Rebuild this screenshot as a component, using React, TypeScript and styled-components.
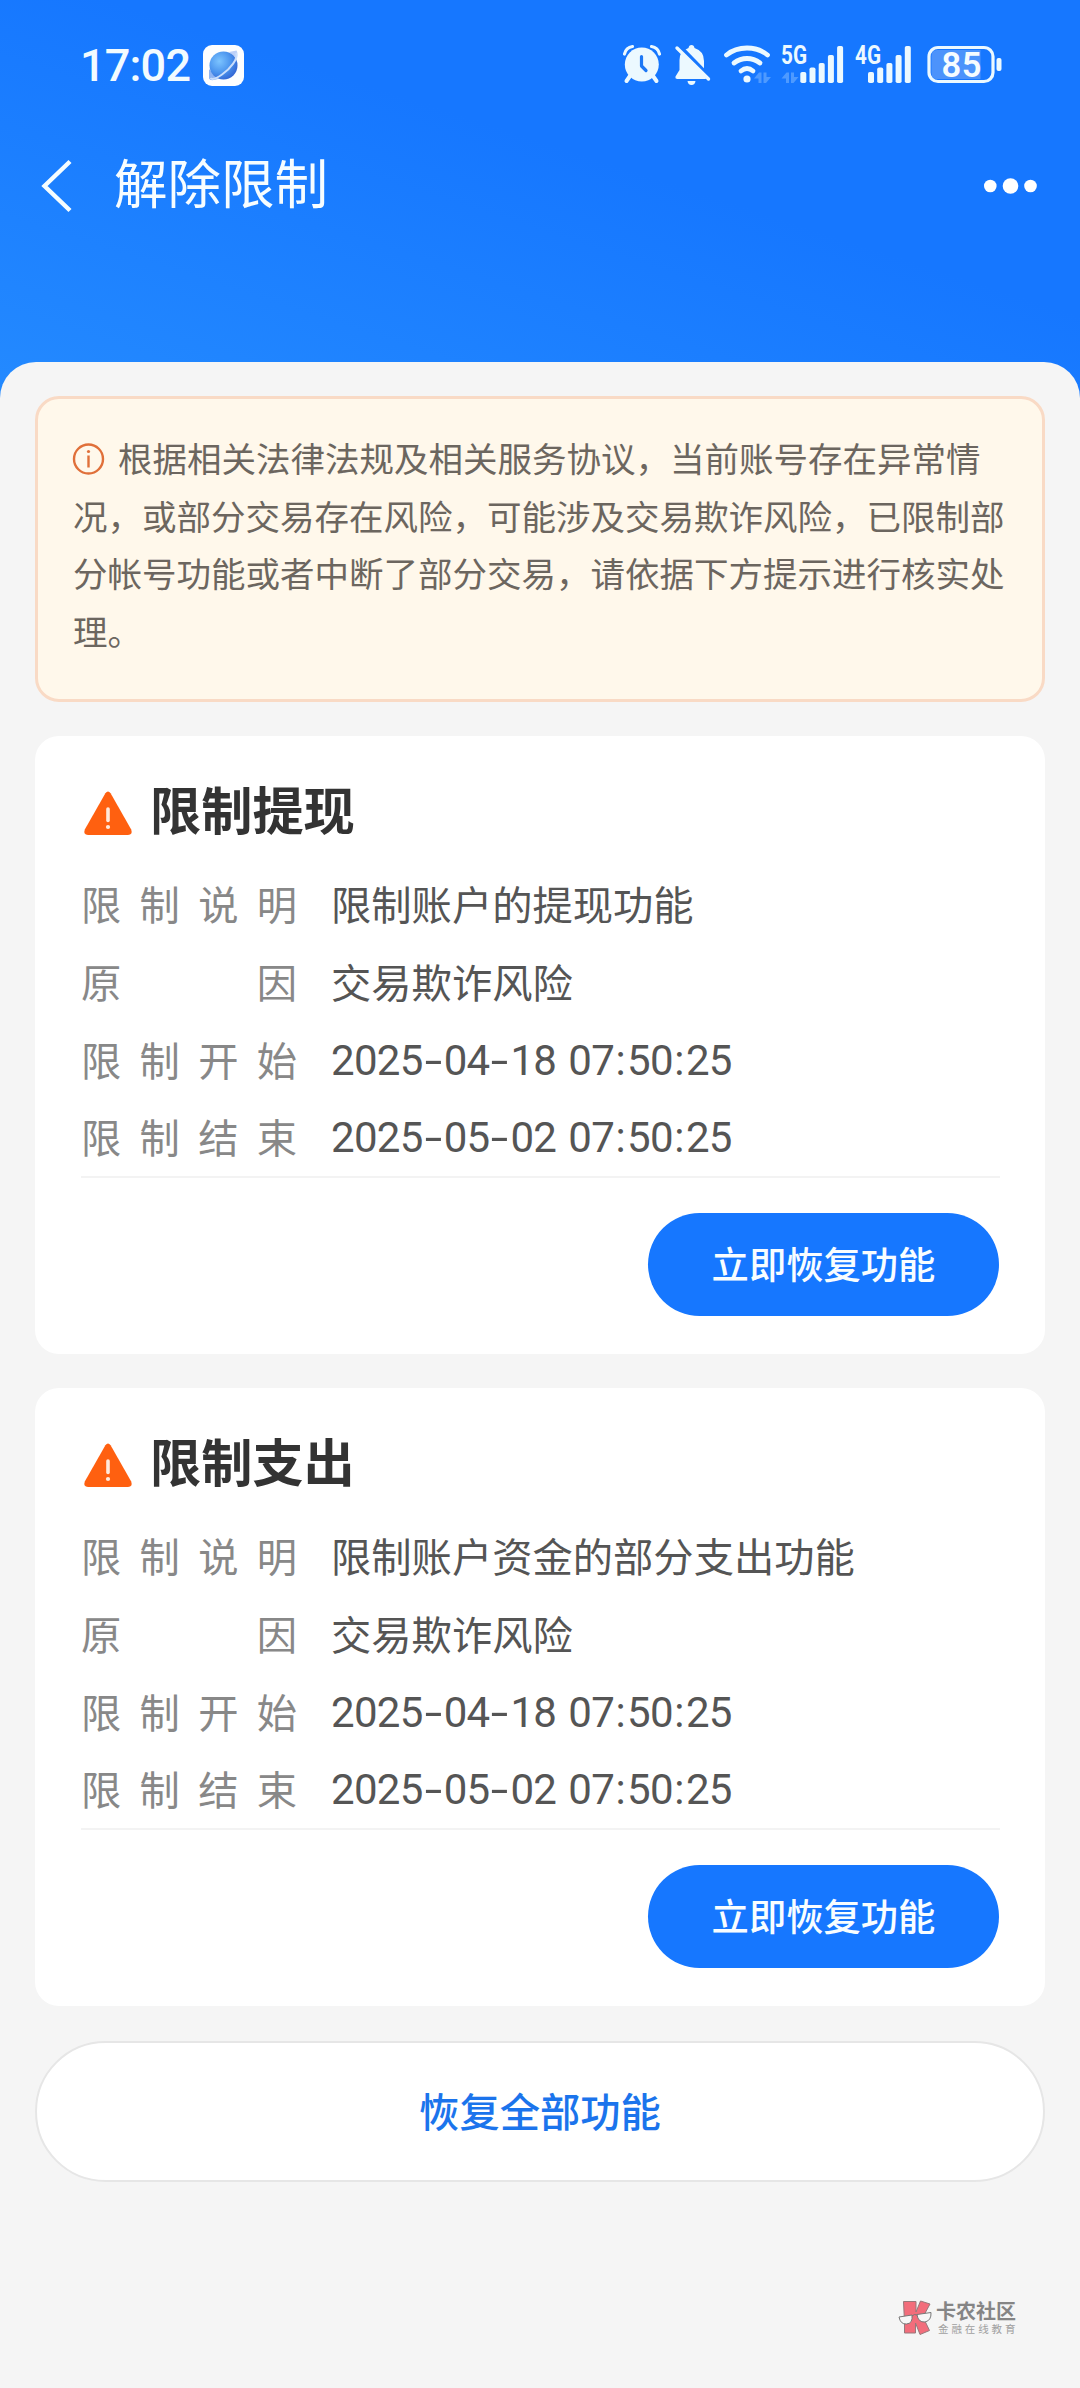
import React from "react";
import styled, { createGlobalStyle } from "styled-components";

const CJK = `"Noto Sans CJK SC", "Noto Sans", sans-serif`;
const LATIN = `Roboto, "Noto Sans CJK SC", sans-serif`;

const GlobalStyle = createGlobalStyle`
  * { box-sizing: border-box; }
  html, body { margin: 0; padding: 0; background: #f5f5f5; }
  body { font-family: ${CJK}; }
  button { font-family: inherit; border: 0; margin: 0; padding: 0; cursor: pointer; }
  svg { display: block; flex: none; overflow: visible; }
`;

const Page = styled.div`
  width: 1080px;
  min-height: 2388px;
  display: flex;
  flex-direction: column;
  background: linear-gradient(198deg, #1677ff 0, #1677ff 300px, #2389ff 690px);
`;

const StatusBar = styled.header`
  display: flex;
  align-items: flex-start;
  justify-content: space-between;
  height: 130px;
  padding: 43px 77px 0 80px;
`;

const StatusLeft = styled.div`
  display: flex;
  align-items: center;
  gap: 13px;
  height: 45px;
`;

const Clock = styled.span`
  width: 110px;
  font: 500 45px/45px ${LATIN};
  letter-spacing: -0.8px;
  color: #f2fbff;
  white-space: nowrap;
`;

const StatusRight = styled.div`
  display: flex;
  align-items: flex-start;
`;

const StatusIcon = styled.svg<{ $gap?: number }>`
  margin-left: ${(p) => p.$gap ?? 0}px;
`;

const NavBar = styled.nav`
  display: flex;
  align-items: center;
  height: 112px;
  padding: 0 42px 0 39px;
`;

const NavTitle = styled.h1`
  flex: 1;
  margin: 0 0 5px 41px;
  padding-bottom: 5px;
  font-size: 53.5px;
  line-height: 72px;
  font-weight: 400;
  color: #f7fdff;
`;

const Sheet = styled.main`
  flex: 1;
  display: flex;
  flex-direction: column;
  gap: 34px;
  margin-top: 120px;
  padding: 34px 35px 0;
  border-radius: 36px 36px 0 0;
  background: #f5f5f5;
`;

const Notice = styled.p`
  height: 306px;
  margin: 0;
  padding: 30px 34px 0 35px;
  border: 3px solid #f9dac5;
  border-radius: 24px;
  background: #fff8eb;
  color: #6c665f;
  font-size: 34.5px;
  line-height: 57.6px;
`;

const NoticeIcon = styled.svg`
  && {
    display: inline-block;
  }
  vertical-align: -3px;
  margin-right: 13px;
`;

const Card = styled.section`
  display: flex;
  flex-direction: column;
  height: 618px;
  padding: 36px 45px 38px 46px;
  border-radius: 24px;
  background: #fff;
`;

const CardHead = styled.div`
  display: flex;
  align-items: center;
  height: 72px;
  padding-left: 2px;
  gap: 17px;

  svg {
    margin-top: 10px;
  }
`;

const CardTitle = styled.h2`
  margin: 0;
  font-size: 51.2px;
  line-height: 72px;
  font-weight: 600;
  color: #333;
`;

const Rows = styled.dl`
  margin: 20px 0 1px;
`;

const Row = styled.div`
  display: flex;
  height: 77.75px;
  line-height: 77.75px;
  font-size: 40.3px;
`;

const Label = styled.dt`
  display: flex;
  justify-content: space-between;
  width: 216px;
  color: #888;
`;

const Value = styled.dd<{ $numeric?: boolean }>`
  margin: 0 0 0 34px;
  color: #555;
  white-space: pre;
  ${(p) =>
    p.$numeric &&
    `padding-top: 2px; font-family: ${LATIN}; font-size: 42px; letter-spacing: -0.7px;`}
`;

const Mark = styled.span<{ $width: number; $stretch?: number }>`
  display: inline-block;
  width: ${(p) => p.$width}px;
  text-align: center;
  letter-spacing: 0;
  transform: scaleX(${(p) => p.$stretch ?? 1});
`;

const Divider = styled.hr`
  width: 100%;
  height: 2px;
  margin: 0;
  border: 0;
  background: #f3f3f3;
`;

const RestoreButton = styled.button`
  align-self: flex-end;
  width: 351px;
  height: 103px;
  margin: 35px 1px 0 0;
  padding-bottom: 4px;
  border-radius: 52px;
  background: #1677ff;
  color: #f8fdff;
  font-size: 37.3px;
  font-weight: 500;
`;

const RestoreAllButton = styled.button`
  && {
    border: 2px solid #e6e6e6;
  }
  height: 141px;
  margin-top: 1px;
  padding-bottom: 5px;
  border-radius: 71px;
  background: #fff;
  color: #1b74ec;
  font-size: 40.3px;
  font-weight: 500;
`;

const Watermark = styled.footer`
  display: flex;
  align-self: flex-end;
  gap: 3px;
  margin: 84px 28px 0 0;
`;

const BrandText = styled.div`
  width: 81px;
  white-space: nowrap;
`;

const BrandName = styled.div`
  font-size: 20px;
  line-height: 22px;
  font-weight: 700;
  color: #858585;
`;

const BrandSub = styled.div`
  padding-left: 2px;
  font-size: 10.5px;
  line-height: 14px;
  letter-spacing: 2.9px;
  color: #a0a0a0;
`;

const INK = "#ecf9ff";

const BrowserBadge = () => (
  <svg width="41" height="41" viewBox="0 0 41 41">
    <defs>
      <radialGradient id="globe" cx="0.35" cy="0.35" r="0.75">
        <stop offset="0" stopColor="#7cc4ff" />
        <stop offset="0.55" stopColor="#4b94ee" />
        <stop offset="1" stopColor="#2f5fd0" />
      </radialGradient>
    </defs>
    <rect width="41" height="41" rx="9" fill="#fdfeff" />
    <path d="M26 7 L33.500 5.500 Q35.500 8 33 13 Z" fill="#bcd0f8" />
    <path d="M6 24 L6 33.500 Q7 36.500 15 34 Z" fill="#8fb4f2" />
    <circle cx="20.500" cy="20.500" r="14" fill="url(#globe)" />
    <path
      d="M33 8 C36 13 27 24 19 29.500 C14 33 9 35 7.500 33"
      fill="none"
      stroke="#c9defc"
      strokeWidth="2"
    />
  </svg>
);

const AlarmIcon = () => (
  <StatusIcon width="38" height="42" viewBox="0 0 38 42">
    <path
      d="M1.500 11 Q3 4.500 9.500 3.500 M28.500 3.500 Q35 4.500 36.500 11"
      fill="none"
      stroke={INK}
      strokeWidth="3.200"
      strokeLinecap="round"
    />
    <path d="M7 33 L3.500 38 M30 33 L33.500 38" stroke={INK} strokeWidth="4" strokeLinecap="round" />
    <circle cx="18.800" cy="21.500" r="17" fill={INK} />
    <path
      d="M18.500 13.500 V23 L23 27.500"
      fill="none"
      stroke="#1d78f5"
      strokeWidth="3.200"
      strokeLinecap="round"
      strokeLinejoin="round"
    />
  </StatusIcon>
);

const BellOffIcon = () => (
  <StatusIcon $gap={14} width="36" height="44" viewBox="0 0 36 44">
    <path
      d="M13.500 5 Q14 2 16.500 2 Q19 2 19.500 5 Q29 8 29 18 V27 L32 33.500 Q32 36 30 36 H2.500 Q0 36 0.500 33.500 L4.500 27 V17 Q4.500 8 13.500 5 Z"
      fill={INK}
    />
    <path d="M12.500 38 H20.500 Q20 42 16.500 42 Q13 42 12.500 38 Z" fill={INK} />
    <path d="M4.500 3 L37 36.500" stroke="#1677ff" strokeWidth="4" />
    <path d="M2 5 L33.500 36" stroke={INK} strokeWidth="3.400" strokeLinecap="round" />
  </StatusIcon>
);

const DataArrows = () => (
  <path
    d="M0 6.500 L5 0.500 H7.500 V11 H4.500 V6.500 Z M9.500 0.500 H12.500 V5 H17 L12 11 H9.500 Z"
    fill="#4e9aff"
  />
);

const WifiIcon = () => (
  <StatusIcon $gap={12} width="50" height="42" viewBox="0 0 50 42">
    <g fill="none" stroke={INK} strokeWidth="4.800" strokeLinecap="round">
      <path d="M3.500 12 Q12 5 24 5 Q36 5 44.500 12" />
      <path d="M11 20 Q17 15.500 24 15.500 Q31 15.500 37 20" />
      <path d="M18 28 Q21 25.500 24 25.500 Q27 25.500 30 28" />
    </g>
    <circle cx="24" cy="36" r="3.600" fill={INK} />
    <g transform="translate(31 29)">
      <DataArrows />
    </g>
  </StatusIcon>
);

const SignalIcon = ({ label, arrows, gap }: { label: string; arrows?: boolean; gap: number }) => {
  const x = arrows ? 19.3 : 13;
  return (
    <StatusIcon $gap={gap} width={arrows ? 63 : 57} height="42" viewBox={`0 0 ${arrows ? 63 : 57} 42`}>
      <text
        x="0"
        y="20.800"
        fill={INK}
        fontFamily="Roboto, sans-serif"
        fontWeight="700"
        fontSize="25"
        textLength="26"
        lengthAdjust="spacingAndGlyphs"
      >
        {label}
      </text>
      {arrows && (
        <g transform="translate(0.500 29)">
          <DataArrows />
        </g>
      )}
      {[11, 15.5, 20, 28, 37].map((h, i) => (
        <rect key={h} x={x + i * 9.2} y={40 - h} width="6" height={h} rx="1.800" fill={INK} />
      ))}
    </StatusIcon>
  );
};

const BatteryIcon = () => (
  <StatusIcon $gap={14} width="77" height="42" viewBox="0 0 77 42">
    <path d="M11 7 H54.500 V36 H11 Q5.500 36 5.500 30 V13 Q5.500 7 11 7 Z" fill="#4c93fb" />
    <rect x="3" y="4.500" width="64" height="34" rx="9" fill="none" stroke={INK} strokeWidth="3.200" />
    <rect x="70.500" y="15" width="5" height="13" rx="2" fill={INK} />
    <text
      x="15.500"
      y="33.800"
      fill="#f6fcff"
      fontFamily="Roboto, sans-serif"
      fontWeight="600"
      fontSize="34.500"
      textLength="40"
      lengthAdjust="spacing"
    >
      85
    </text>
  </StatusIcon>
);

const BackIcon = () => (
  <svg width="34" height="56" viewBox="0 0 34 56">
    <path d="M31 3.500 L5.500 28 L31 52.500" fill="none" stroke="#f5fdff" strokeWidth="4.400" />
  </svg>
);

const MoreIcon = () => (
  <svg width="56" height="18" viewBox="0 0 56 18">
    <circle cx="8.300" cy="9" r="6.300" fill="#fff" />
    <circle cx="28.500" cy="9" r="7.800" fill="#fff" />
    <circle cx="48.500" cy="9" r="6.300" fill="#fff" />
  </svg>
);

const WarningIcon = () => (
  <svg width="50" height="46" viewBox="0 0 50 46">
    <path
      d="M22.400 3.300 Q25 -0.300 27.600 3.300 L48.200 39.500 Q50 44.700 45 45 H5 Q0 44.700 1.800 39.500 Z"
      fill="#ff6010"
    />
    <path d="M25 19 V30.500" stroke="#ffe9dc" strokeWidth="3.600" strokeLinecap="round" />
    <circle cx="25" cy="37" r="2.100" fill="#ffe9dc" />
  </svg>
);

const BrandLogo = () => (
  <svg width="35" height="36" viewBox="0 0 35 36">
    <path
      d="M5.500 1.500 H18 V12 L22.500 1 L32 4 L25 17 L31.500 30.500 L22 34.500 L17.500 23 V33 H6.500 V22 Z"
      fill="#f26d7b"
      stroke="#97797c"
      strokeWidth="1"
    />
    <g fill="#f7f7f7" stroke="#777" strokeWidth="1">
      <path d="M1 17 L14 15 Q15 23.500 8.500 24 Q2.500 24.500 1 17 Z" />
      <path d="M19 14.500 L33 12.500 Q33.500 20.500 27 22 Q20 22.500 19 14.500 Z" />
    </g>
    <path d="M14 16 Q16.500 13.500 19 15" fill="none" stroke="#777" />
  </svg>
);

const Timestamp = ({ text }: { text: string }) => (
  <Value $numeric>
    {text.split(/([-: ])/).map((part, i) => {
      if (part === "-") return <Mark key={i} $width={21} $stretch={1.5}>-</Mark>;
      if (part === ":") return <Mark key={i} $width={13}>:</Mark>;
      if (part === " ") return <Mark key={i} $width={12}> </Mark>;
      return part;
    })}
  </Value>
);

interface Restriction {
  title: string;
  description: string;
  reason: string;
  start: string;
  end: string;
}

const restrictions: Restriction[] = [
  {
    title: "限制提现",
    description: "限制账户的提现功能",
    reason: "交易欺诈风险",
    start: "2025-04-18 07:50:25",
    end: "2025-05-02 07:50:25",
  },
  {
    title: "限制支出",
    description: "限制账户资金的部分支出功能",
    reason: "交易欺诈风险",
    start: "2025-04-18 07:50:25",
    end: "2025-05-02 07:50:25",
  },
];

const SpreadLabel = ({ text }: { text: string }) => (
  <Label>
    {[...text].map((c) => (
      <span key={c}>{c}</span>
    ))}
  </Label>
);

const RestrictionCard = ({ item }: { item: Restriction }) => (
  <Card>
    <CardHead>
      <WarningIcon />
      <CardTitle>{item.title}</CardTitle>
    </CardHead>
    <Rows>
      <Row>
        <SpreadLabel text="限制说明" />
        <Value>{item.description}</Value>
      </Row>
      <Row>
        <SpreadLabel text="原因" />
        <Value>{item.reason}</Value>
      </Row>
      <Row>
        <SpreadLabel text="限制开始" />
        <Timestamp text={item.start} />
      </Row>
      <Row>
        <SpreadLabel text="限制结束" />
        <Timestamp text={item.end} />
      </Row>
    </Rows>
    <Divider />
    <RestoreButton>立即恢复功能</RestoreButton>
  </Card>
);

export default function App() {
  return (
    <Page>
      <GlobalStyle />
      <StatusBar>
        <StatusLeft>
          <Clock>17:02</Clock>
          <BrowserBadge />
        </StatusLeft>
        <StatusRight>
          <AlarmIcon />
          <BellOffIcon />
          <WifiIcon />
          <SignalIcon label="5G" arrows gap={8} />
          <SignalIcon label="4G" gap={11} />
          <BatteryIcon />
        </StatusRight>
      </StatusBar>
      <NavBar>
        <BackIcon />
        <NavTitle>解除限制</NavTitle>
        <MoreIcon />
      </NavBar>
      <Sheet>
        <Notice>
          <NoticeIcon width="32" height="32" viewBox="0 0 32 32">
            <circle cx="15.500" cy="16" r="14.500" fill="none" stroke="#e0703a" strokeWidth="2.400" />
            <path d="M15.500 12.500 V24.500" fill="none" stroke="#e0703a" strokeWidth="2.400" />
            <circle cx="15.500" cy="8.500" r="1.600" fill="#e0703a" />
          </NoticeIcon>
          根据相关法律法规及相关服务协议，当前账号存在异常情况，或部分交易存在风险，可能涉及交易欺诈风险，已限制部分帐号功能或者中断了部分交易，请依据下方提示进行核实处理。
        </Notice>
        {restrictions.map((item) => (
          <RestrictionCard key={item.title} item={item} />
        ))}
        <RestoreAllButton>恢复全部功能</RestoreAllButton>
        <Watermark>
          <BrandLogo />
          <BrandText>
            <BrandName>卡农社区</BrandName>
            <BrandSub>金融在线教育</BrandSub>
          </BrandText>
        </Watermark>
      </Sheet>
    </Page>
  );
}
